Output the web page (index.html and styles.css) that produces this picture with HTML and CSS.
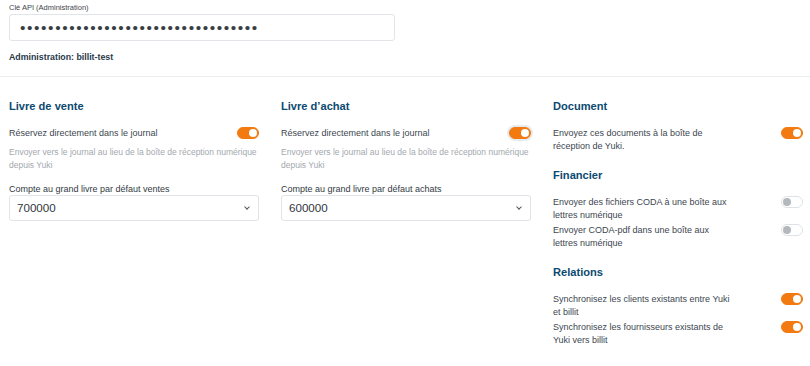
FILE: index.html
```html
<!DOCTYPE html>
<html lang="fr">

<head>
  <meta charset="utf-8">
  <link rel="stylesheet" href="styles.css">
</head>

<body>
  <div class="top">
    <label class="field-label small" for="apikey">Clé API (Administration)</label>
    <input class="form-control key" id="apikey" type="password" value="abcdefghijklmnopqrstuvwxyz01234567">
    <p class="admin">Administration: billit-test</p>
  </div>
  <div class="settings">
    <!-- ventes -->
    <div class="col">
      <h3 class="title">Livre de vente</h3>
      <div class="opt">
        <span class="opt-text">Réservez directement dans le journal</span>
        <span class="switch on"></span>
      </div>
      <p class="hint">Envoyer vers le journal au lieu de la boîte de réception numérique depuis Yuki</p>
      <label class="field-label">Compte au grand livre par défaut ventes</label>
      <div class="select">700000</div>
    </div>
    <!-- achats -->
    <div class="col">
      <h3 class="title">Livre d’achat</h3>
      <div class="opt">
        <span class="opt-text">Réservez directement dans le journal</span>
        <span class="switch on focus"></span>
      </div>
      <p class="hint">Envoyer vers le journal au lieu de la boîte de réception numérique depuis Yuki</p>
      <label class="field-label">Compte au grand livre par défaut achats</label>
      <div class="select">600000</div>
    </div>
    <!-- documents -->
    <div class="col">
      <h3 class="title">Document</h3>
      <div class="opt">
        <span class="opt-text narrow">Envoyez ces documents à la boîte de réception de Yuki.</span>
        <span class="switch on"></span>
      </div>
      <h3 class="title sub">Financier</h3>
      <div class="opt">
        <span class="opt-text narrow">Envoyer des fichiers CODA à une boîte aux lettres numérique</span>
        <span class="switch"></span>
      </div>
      <div class="opt">
        <span class="opt-text narrow">Envoyer CODA-pdf dans une boîte aux lettres numérique</span>
        <span class="switch"></span>
      </div>
      <h3 class="title sub">Relations</h3>
      <div class="opt">
        <span class="opt-text narrow">Synchronisez les clients existants entre Yuki et billit</span>
        <span class="switch on"></span>
      </div>
      <div class="opt">
        <span class="opt-text narrow">Synchronisez les fournisseurs existants de Yuki vers billit</span>
        <span class="switch on"></span>
      </div>
    </div>
  </div>
</body>

</html>
```

FILE: styles.css
```css
* {
  box-sizing: border-box;
}

body,
input,
label,
p,
h3 {
  margin: 0;
  font-family: "Liberation Sans", Arial, Helvetica, sans-serif;
}

body {
  background: #fff;
  color: #3d4650;
  font-size: 9px;
}

/* top */

.top {
  padding: 2px 9px 0;
  border-bottom: 1px solid #eceef0;
  height: 77px;
}

.field-label {
  display: block;
  font-size: 9px;
  line-height: 12px;
  color: #333a42;
}

.field-label.small {
  font-size: 7.5px;
  color: #3f454c;
}

.form-control {
  display: block;
  border: 1px solid #e1e4e8;
  border-radius: 3px;
  background: #fff;
  outline: none;
}

.key {
  width: 386px;
  height: 27px;
  padding: 0 10px;
  font-size: 15.5px;
  letter-spacing: 1.6px;
  color: #3a3f45;
}

.admin {
  margin-top: 11px;
  font-size: 8.8px;
  font-weight: bold;
  color: #273849;
}

/* columns */

.settings {
  display: grid;
  grid-template-columns: repeat(3, 1fr);
  column-gap: 22px;
  padding: 0 7px 0 9px;
}

.title {
  margin: 22px 0 0;
  font-size: 11.1px;
  line-height: 14px;
  color: #0b4a70;
}

.title.sub {
  margin-top: 15px;
}

.opt {
  display: flex;
  justify-content: space-between;
  align-items: flex-start;
  line-height: 13px;
  font-size: 9px;
  color: #3d4650;
}

.opt + .opt {
  margin-top: 2px;
}

.title + .opt {
  margin-top: 14px;
}

.opt-text.narrow {
  max-width: 183px;
}

.hint {
  margin-top: 6px;
  font-size: 8.5px;
  line-height: 12.5px;
  color: #a3a8ad;
}

.hint + .field-label {
  margin-top: 12px;
}

.select {
  position: relative;
  height: 26px;
  padding: 0 7px;
  border: 1px solid #e1e4e8;
  border-radius: 3px;
  font-size: 11.6px;
  line-height: 24px;
  color: #2f3740;
}

.select::after {
  content: "";
  position: absolute;
  right: 9px;
  top: 9px;
  width: 3px;
  height: 3px;
  border-right: 1.2px solid #555;
  border-bottom: 1.2px solid #555;
  transform: rotate(45deg);
}

/* switch */

.switch {
  position: relative;
  flex: none;
  width: 22px;
  height: 12px;
  border: 1px solid #dfe2e6;
  border-radius: 6px;
  background: #fff;
}

.switch::after {
  content: "";
  position: absolute;
  left: 1px;
  top: 1px;
  width: 8px;
  height: 8px;
  border-radius: 50%;
  background: #b3b8bd;
}

.switch.on {
  border-color: #f27a10;
  background: #f27a10;
}

.switch.on::after {
  left: 11px;
  background: #fff;
}

.switch.focus {
  box-shadow: 0 0 0 2px #e7eaee;
}
```
